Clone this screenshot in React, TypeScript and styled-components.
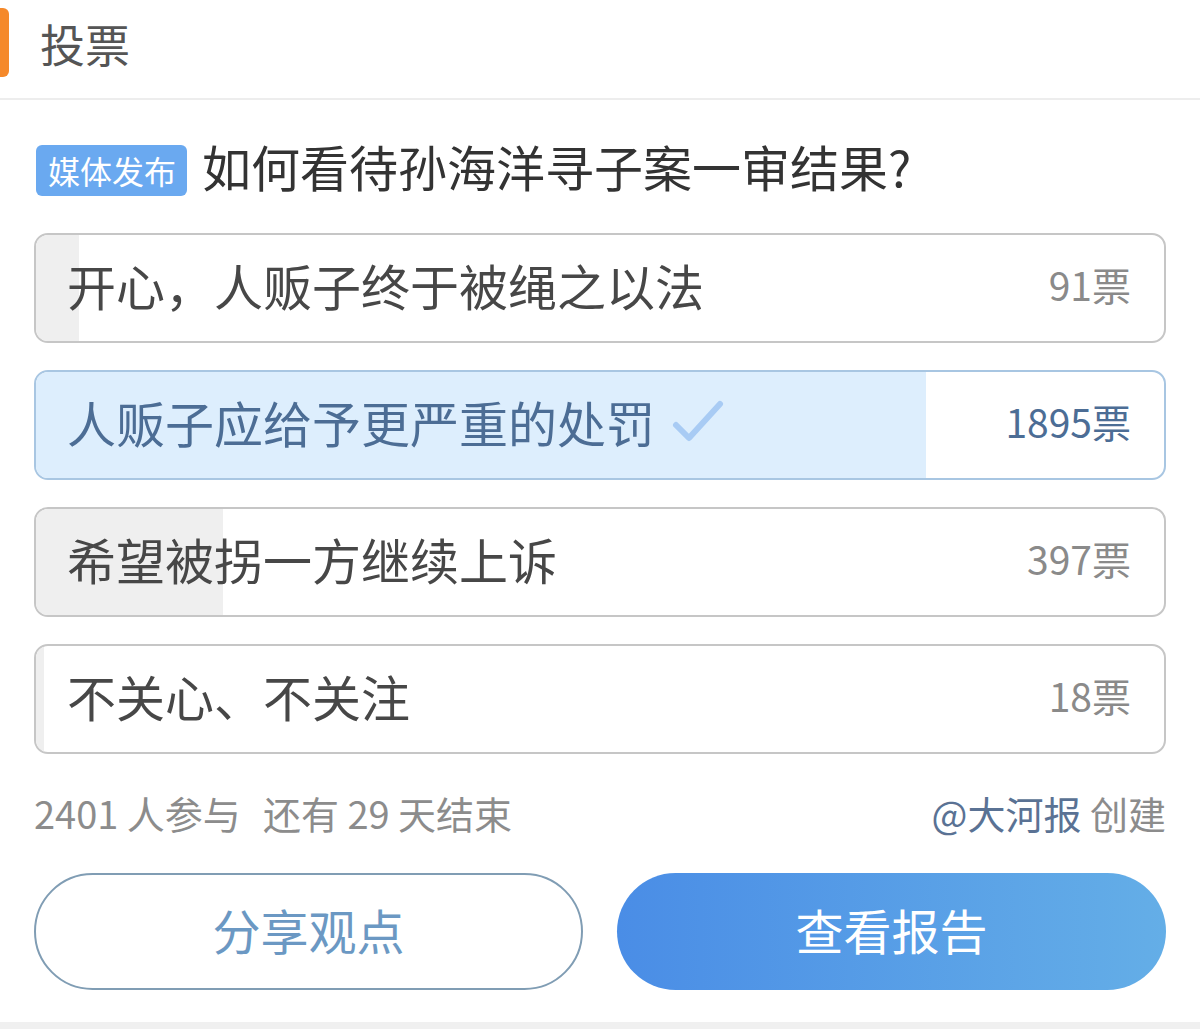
import React from "react";
import styled, { createGlobalStyle } from "styled-components";

const GlobalStyle = createGlobalStyle`
  html, body { margin: 0; padding: 0; background: #ffffff; }
  body { font-family: "Noto Sans CJK SC", "Noto Sans", sans-serif; }
  * { box-sizing: border-box; }
`;

const Page = styled.div`
  width: 1200px;
  height: 1029px;
  display: flex;
  flex-direction: column;
  background: #fff;
  overflow: hidden;
`;

const Header = styled.div`
  height: 100px;
  display: flex;
  align-items: flex-start;
  border-bottom: 2px solid #ededed;
`;

const Accent = styled.div`
  width: 9px;
  height: 69px;
  margin-top: 8px;
  background: #f5892a;
  border-radius: 0 6px 6px 0;
`;

const HeaderTitle = styled.h1`
  margin: 14px 0 0 31px;
  font-size: 45px;
  line-height: 60px;
  font-weight: 400;
  color: #555;
`;

const Body = styled.div`
  padding: 0 34px;
  display: flex;
  flex-direction: column;
`;

const TitleRow = styled.div`
  margin-top: 42px;
  height: 56px;
  display: flex;
  align-items: center;
  gap: 15px;
`;

const Badge = styled.span`
  height: 51px;
  padding: 0 11px 0 12px;
  margin-left: 2px;
  display: inline-flex;
  align-items: center;
  border-radius: 6px;
  background: #6aa9f0;
  color: #fff;
  font-size: 32px;
`;

const Question = styled.span`
  font-size: 49px;
  color: #333;
  line-height: 56px;
  margin-top: -8px;
`;

const Options = styled.div`
  margin-top: 35px;
  display: flex;
  flex-direction: column;
  gap: 27px;
`;

const Option = styled.div<{ $selected?: boolean }>`
  position: relative;
  height: 110px;
  border: 2px solid ${(p) => (p.$selected ? "#a8c6e2" : "#c6c6c6")};
  border-radius: 14px;
  overflow: hidden;
  display: flex;
  align-items: center;
  padding: 0 33px 8px 31px;
  background: #fff;
`;

const Fill = styled.div<{ $selected?: boolean }>`
  position: absolute;
  left: 0;
  top: 0;
  bottom: 0;
  background: ${(p) => (p.$selected ? "#ddeefd" : "#efefef")};
`;

const OptionLabel = styled.span<{ $selected?: boolean }>`
  position: relative;
  flex: 1;
  display: flex;
  align-items: center;
  gap: 16px;
  font-size: 49px;
  color: ${(p) => (p.$selected ? "#4c6d95" : "#474747")};
`;

const Votes = styled.span<{ $selected?: boolean }>`
  position: relative;
  font-size: 39px;
  color: ${(p) => (p.$selected ? "#4c6d95" : "#8a8a8a")};
`;

const Stats = styled.div`
  margin-top: 36px;
  height: 50px;
  display: flex;
  align-items: center;
  justify-content: space-between;
  font-size: 38px;
  color: #8c8c8c;
  padding-bottom: 6px;
`;

const StatsLeft = styled.span`
  display: flex;
  gap: 22px;
`;

const Author = styled.span`
  color: #5a7294;
`;

const Buttons = styled.div`
  margin-top: 33px;
  display: grid;
  grid-template-columns: 1fr 1fr;
  gap: 34px;
`;

const Button = styled.button<{ $primary?: boolean }>`
  height: 117px;
  border-radius: 59px;
  font-family: inherit;
  font-size: 48px;
  padding: 0 0 6px;
  cursor: pointer;
  border: ${(p) => (p.$primary ? "none" : "2px solid #809db4")};
  background: ${(p) =>
    p.$primary ? "linear-gradient(90deg, #4a8de6 0%, #64aee7 100%)" : "#fff"};
  color: ${(p) => (p.$primary ? "#fff" : "#6b98c3")};
`;

const BottomBand = styled.div`
  margin-top: auto;
  height: 7px;
  background: #f0f0f0;
`;

const Check = () => (
  <svg width="54" height="46" viewBox="0 0 54 46" aria-hidden="true">
    <path
      d="M5 27 L18 40 L49 6"
      fill="none"
      stroke="#a8cbf4"
      strokeWidth="6"
      strokeLinecap="round"
      strokeLinejoin="round"
    />
  </svg>
);

const TOTAL = 2401;
const options = [
  { label: "开心，人贩子终于被绳之以法", votes: 91 },
  { label: "人贩子应给予更严重的处罚", votes: 1895, selected: true },
  { label: "希望被拐一方继续上诉", votes: 397 },
  { label: "不关心、不关注", votes: 18 },
];

export default function App() {
  return (
    <Page>
      <GlobalStyle />
      <Header>
        <Accent />
        <HeaderTitle>投票</HeaderTitle>
      </Header>
      <Body>
        <TitleRow>
          <Badge>媒体发布</Badge>
          <Question>如何看待孙海洋寻子案一审结果?</Question>
        </TitleRow>
        <Options>
          {options.map((o) => (
            <Option key={o.label} $selected={o.selected}>
              <Fill
                $selected={o.selected}
                style={{ width: `${(o.votes / TOTAL) * 100}%` }}
              />
              <OptionLabel $selected={o.selected}>
                {o.label}
                {o.selected && <Check />}
              </OptionLabel>
              <Votes $selected={o.selected}>{o.votes}票</Votes>
            </Option>
          ))}
        </Options>
        <Stats>
          <StatsLeft>
            <span>2401 人参与</span>
            <span>还有 29 天结束</span>
          </StatsLeft>
          <span>
            <Author>@大河报</Author> 创建
          </span>
        </Stats>
        <Buttons>
          <Button>分享观点</Button>
          <Button $primary>查看报告</Button>
        </Buttons>
      </Body>
      <BottomBand />
    </Page>
  );
}
